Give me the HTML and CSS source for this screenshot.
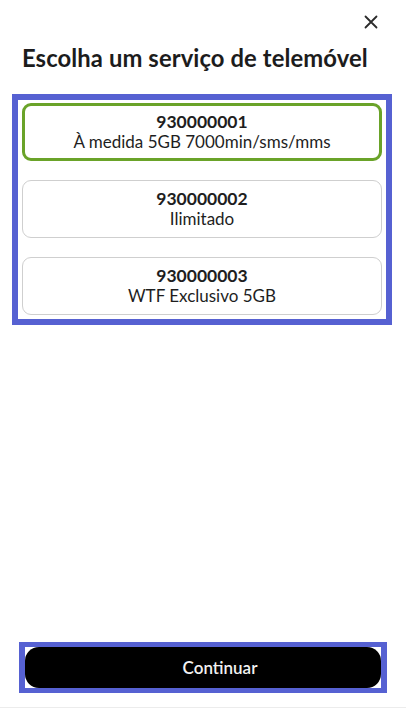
FILE: index.html
```
<!DOCTYPE html>
<html lang="pt">
<head>
<meta charset="utf-8">
<title>Escolha um serviço de telemóvel</title>
<link rel="stylesheet" href="styles.css">
</head>
<body>
<div class="sheet">
  <div class="topbar">
    <button class="close" aria-label="Fechar">
      <svg width="14" height="14" viewBox="0 0 14 14"><path d="M1.5 1.5 L12.5 12.5 M12.5 1.5 L1.5 12.5" stroke="#2b2b2b" stroke-width="1.8" stroke-linecap="round" fill="none"/></svg>
    </button>
  </div>
  <h1 class="title">Escolha um serviço de telemóvel</h1>
  <div class="options">
    <div class="option selected">
      <span class="num">930000001</span>
      <span class="plan">À medida 5GB 7000min/sms/mms</span>
    </div>
    <div class="option">
      <span class="num">930000002</span>
      <span class="plan">Ilimitado</span>
    </div>
    <div class="option">
      <span class="num">930000003</span>
      <span class="plan">WTF Exclusivo 5GB</span>
    </div>
  </div>
  <div class="footer">
    <div class="btn-frame">
      <button class="continue">Continuar</button>
    </div>
  </div>
</div>
</body>
</html>
```
FILE: styles.css
```
* { box-sizing: border-box; }
html, body { margin: 0; padding: 0; background: #fff; }
body { font-family: Lato, "Open Sans", sans-serif; color: #1c1c1c; }

.sheet {
  height: 708px;
  display: flex;
  flex-direction: column;
}

.topbar {
  height: 44px;
  display: flex;
  justify-content: flex-end;
  align-items: flex-start;
  padding: 15px 28px 0 0;
}
.close {
  border: 0;
  background: none;
  padding: 0;
  width: 14px;
  height: 14px;
  display: block;
}
.close svg { display: block; }

.title {
  margin: 0 0 22px 22px;
  font-size: 23.8px;
  line-height: 28px;
  font-weight: 700;
  color: #1c1c1c;
  letter-spacing: 0.1px;
}

.options {
  margin-left: 12px;
  width: 380px;
  border: 6px solid #5661d2;
  padding: 3px 4px 4px 4px;
  display: flex;
  flex-direction: column;
  gap: 19px;
}
.option {
  height: 58px;
  border: 1px solid #cfcfcf;
  border-radius: 9px;
  display: flex;
  flex-direction: column;
  align-items: center;
  justify-content: center;
  font-size: 17px;
  line-height: 20px;
  color: #1e1e1e;
}
.option.selected {
  border: 3px solid #6aa329;
}
.num { font-weight: 700; font-size: 17.5px; }
.plan { font-weight: 400; }

.footer {
  margin-top: auto;
  padding: 0 0 14px 19px;
  border-bottom: 1px solid #ececec;
}
.btn-frame {
  width: 368px;
  border-style: solid;
  border-color: #5661d2;
  border-width: 5px 6px;
}
.continue {
  display: block;
  width: 100%;
  height: 41px;
  border: 0;
  border-radius: 14px;
  background: #000;
  color: #f2f2f2;
  font-family: Lato, "Open Sans", sans-serif;
  font-size: 17px;
  font-weight: 600;
  padding: 0 0 0 34px;
}
```
